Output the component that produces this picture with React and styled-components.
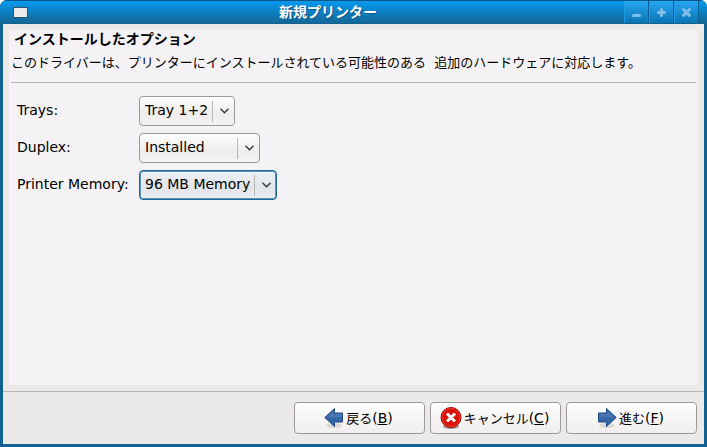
import React from "react";
import styled, { createGlobalStyle, css } from "styled-components";

const options = [
  { id: "trays", label: "Trays:", values: ["Tray 1+2"] },
  { id: "duplex", label: "Duplex:", values: ["Installed", "Not Installed"] },
  { id: "memory", label: "Printer Memory:", values: ["96 MB Memory"], active: true },
];

const ArrowShape = ({ flip }) => (
  <svg width="20" height="24" viewBox="0 0 20 24" aria-hidden="true">
    <ellipse cx="10" cy="19.5" rx="8" ry="2.5" fill="#000" opacity="0.1" />
    <g transform={flip ? "translate(20 0) scale(-1 1)" : undefined}>
      <path
        d="M0.8 11.5 10.5 2.5V7H18.5V16H10.5V20.5Z"
        fill="#3465a4"
        stroke="#204a87"
        strokeLinejoin="round"
      />
      <path d="M2.5 11.5 9.5 5V8H17.5V11.5Z" fill="#5c8bc2" opacity="0.5" />
    </g>
  </svg>
);

const CancelShape = () => (
  <svg width="22" height="24" viewBox="0 0 22 24" aria-hidden="true">
    <ellipse cx="11" cy="20.5" rx="8" ry="2.5" fill="#000" opacity="0.35" />
    <circle cx="11" cy="11.5" r="10" fill="#dc1008" stroke="#a40000" />
    <circle cx="11" cy="11.5" r="9" fill="none" stroke="#e8402c" />
    <path d="M7 7.5 15 15.5M15 7.5 7 15.5" stroke="#fff" strokeWidth="3" />
  </svg>
);

const App = () => {
  return (
    <>
      <GlobalStyle />
      <Window>
        <TitleBar>
          <WindowIcon />
          <Title>新規プリンター</Title>
          <WindowControls>
            <ControlButton type="button" aria-label="最小化">
              <svg width="11" height="11" viewBox="0 0 11 11">
                <path d="M2.5 8.5H8.5" />
              </svg>
            </ControlButton>
            <ControlButton type="button" aria-label="最大化">
              <svg width="11" height="11" viewBox="0 0 11 11">
                <path d="M2.5 5.5H8.5M5.5 2.5V8.5" />
              </svg>
            </ControlButton>
            <ControlButton type="button" aria-label="閉じる">
              <svg width="11" height="11" viewBox="0 0 11 11">
                <path d="M2.5 2.5 8.5 8.5M8.5 2.5 2.5 8.5" />
              </svg>
            </ControlButton>
          </WindowControls>
        </TitleBar>

        <Body>
          <Panel>
            <Heading>インストールしたオプション</Heading>
            <Description>
              このドライバーは、プリンターにインストールされている可能性のある&nbsp; 追加のハードウェアに対応します。
            </Description>
            <Divider />
            <OptionList>
              {options.map((option) => (
                <OptionRow key={option.id}>
                  <Label htmlFor={option.id}>{option.label}</Label>
                  <SelectBox>
                    <Select id={option.id} $active={option.active}>
                      {option.values.map((value) => (
                        <option key={value}>{value}</option>
                      ))}
                    </Select>
                    <Chevron>
                      <svg width="9" height="6" viewBox="0 0 9 6" aria-hidden="true">
                        <path d="M0.5 0.8 4.5 4.8 8.5 0.8" fill="none" stroke="#333" strokeWidth="1.3" />
                      </svg>
                    </Chevron>
                  </SelectBox>
                </OptionRow>
              ))}
            </OptionList>
          </Panel>

          <Footer>
            <ActionButton type="button">
              <ArrowShape />
              <Caption>戻る<Mnemonic>(<u>B</u>)</Mnemonic></Caption>
            </ActionButton>
            <ActionButton type="button">
              <CancelShape />
              <Caption>キャンセル<Mnemonic>(<u>C</u>)</Mnemonic></Caption>
            </ActionButton>
            <ActionButton type="button">
              <ArrowShape flip />
              <Caption>進む<Mnemonic>(<u>F</u>)</Mnemonic></Caption>
            </ActionButton>
          </Footer>
        </Body>
      </Window>
    </>
  );
};

export default App;

const GlobalStyle = createGlobalStyle`
  * {
    box-sizing: border-box;
  }

  body {
    margin: 0;
    background: #fff;
    color: #000;
    font-family: "DejaVu Sans", "Noto Sans CJK JP", sans-serif;
    font-size: 13px;
  }

  button,
  select {
    font: inherit;
    color: inherit;
  }
`;

const Window = styled.div`
  display: flex;
  flex-direction: column;
  min-height: 100vh;
  padding: 0 3px 3px;
  background: #136191;
  border-radius: 7px 7px 0 0;
  overflow: hidden;
`;

const TitleBar = styled.header`
  display: grid;
  grid-template-columns: 32px 1fr 83px;
  align-items: center;
  height: 24px;
  margin: 0 -3px;
  border-top: 1px solid #0d5585;
  border-bottom: 1px solid #136191;
  background: linear-gradient(#0599ee, #136796);
`;

const WindowIcon = styled.span`
  width: 15px;
  height: 11px;
  margin-left: 13px;
  border: 1px solid #2c5570;
  background: #ebebeb;
`;

const Title = styled.h1`
  margin: 0;
  color: #fff;
  font-size: 14px;
  line-height: 20px;
  font-weight: 700;
  text-align: center;
  text-shadow: 1px 1px 0 #0b5685;
`;

const WindowControls = styled.div`
  display: flex;
  align-self: stretch;
  padding-right: 8px;
`;

const ControlButton = styled.button`
  display: flex;
  flex: 1;
  align-items: center;
  justify-content: center;
  padding: 0;
  border: none;
  border-left: 1px solid #1f9ae6;
  border-right: 1px solid #0b6196;
  background: linear-gradient(#27a6f5, #0b74b2);

  path {
    fill: none;
    stroke: #7fc0e8;
    stroke-width: 3;
    stroke-linecap: round;
  }
`;

const Body = styled.main`
  display: flex;
  flex: 1;
  flex-direction: column;
  background: #ebeae8;
`;

const Panel = styled.section`
  flex: 1;
  margin: 6px;
  background: #f4f2f4;
`;

const Heading = styled.h2`
  margin: 0;
  padding-left: 5px;
  font-size: 14px;
  line-height: 18px;
  font-weight: 700;
`;

const Description = styled.p`
  margin: 0;
  padding: 5px 2px 9px;
  line-height: 20px;
`;

const Divider = styled.hr`
  margin: 0 2px;
  border: none;
  border-top: 1px solid #b9b7b6;
`;

const OptionList = styled.form`
  display: flex;
  flex-direction: column;
  gap: 7px;
  padding: 13px 8px;
`;

const OptionRow = styled.div`
  display: grid;
  grid-template-columns: 122px max-content;
  align-items: center;
`;

const Label = styled.label`
  font-size: 14px;
  line-height: 18px;
  padding-bottom: 2px;
`;

const SelectBox = styled.div`
  display: grid;
`;

const Select = styled.select`
  grid-area: 1 / 1;
  appearance: none;
  height: 30px;
  padding: 0 25px 2px 5px;
  border: 1px solid #9d999b;
  border-radius: 4px;
  background: linear-gradient(#fdfdfd, #efedeb 60%, #f5f4f2);
  font-size: 14px;

  ${({ $active }) =>
    $active &&
    css`
      border-color: #1c6793;
      box-shadow: inset 0 0 0 1px #5b95b8;
      background: linear-gradient(#edf2f6, #e1e5e9 60%, #edf0f3);
    `}
`;

const Chevron = styled.span`
  grid-area: 1 / 1;
  display: flex;
  align-items: center;
  justify-content: center;
  justify-self: end;
  align-self: center;
  width: 23px;
  height: 21px;
  border-left: 1px solid #b9b6b6;
  pointer-events: none;
`;

const Footer = styled.footer`
  display: flex;
  justify-content: flex-end;
  gap: 5px;
  padding: 10px 7px;
  border-top: 1px solid #b9b7b6;
`;

const ActionButton = styled.button`
  display: flex;
  align-items: center;
  justify-content: center;
  gap: 2px;
  min-width: 131px;
  height: 32px;
  padding: 0 2px 0 0;
  border: 1px solid #9d999b;
  border-radius: 4px;
  background: linear-gradient(#fff, #f5f3f3 60%, #f0efee);
`;

const Caption = styled.span`
  padding-bottom: 2px;
`;

const Mnemonic = styled.span`
  font-size: 14px;
`;
